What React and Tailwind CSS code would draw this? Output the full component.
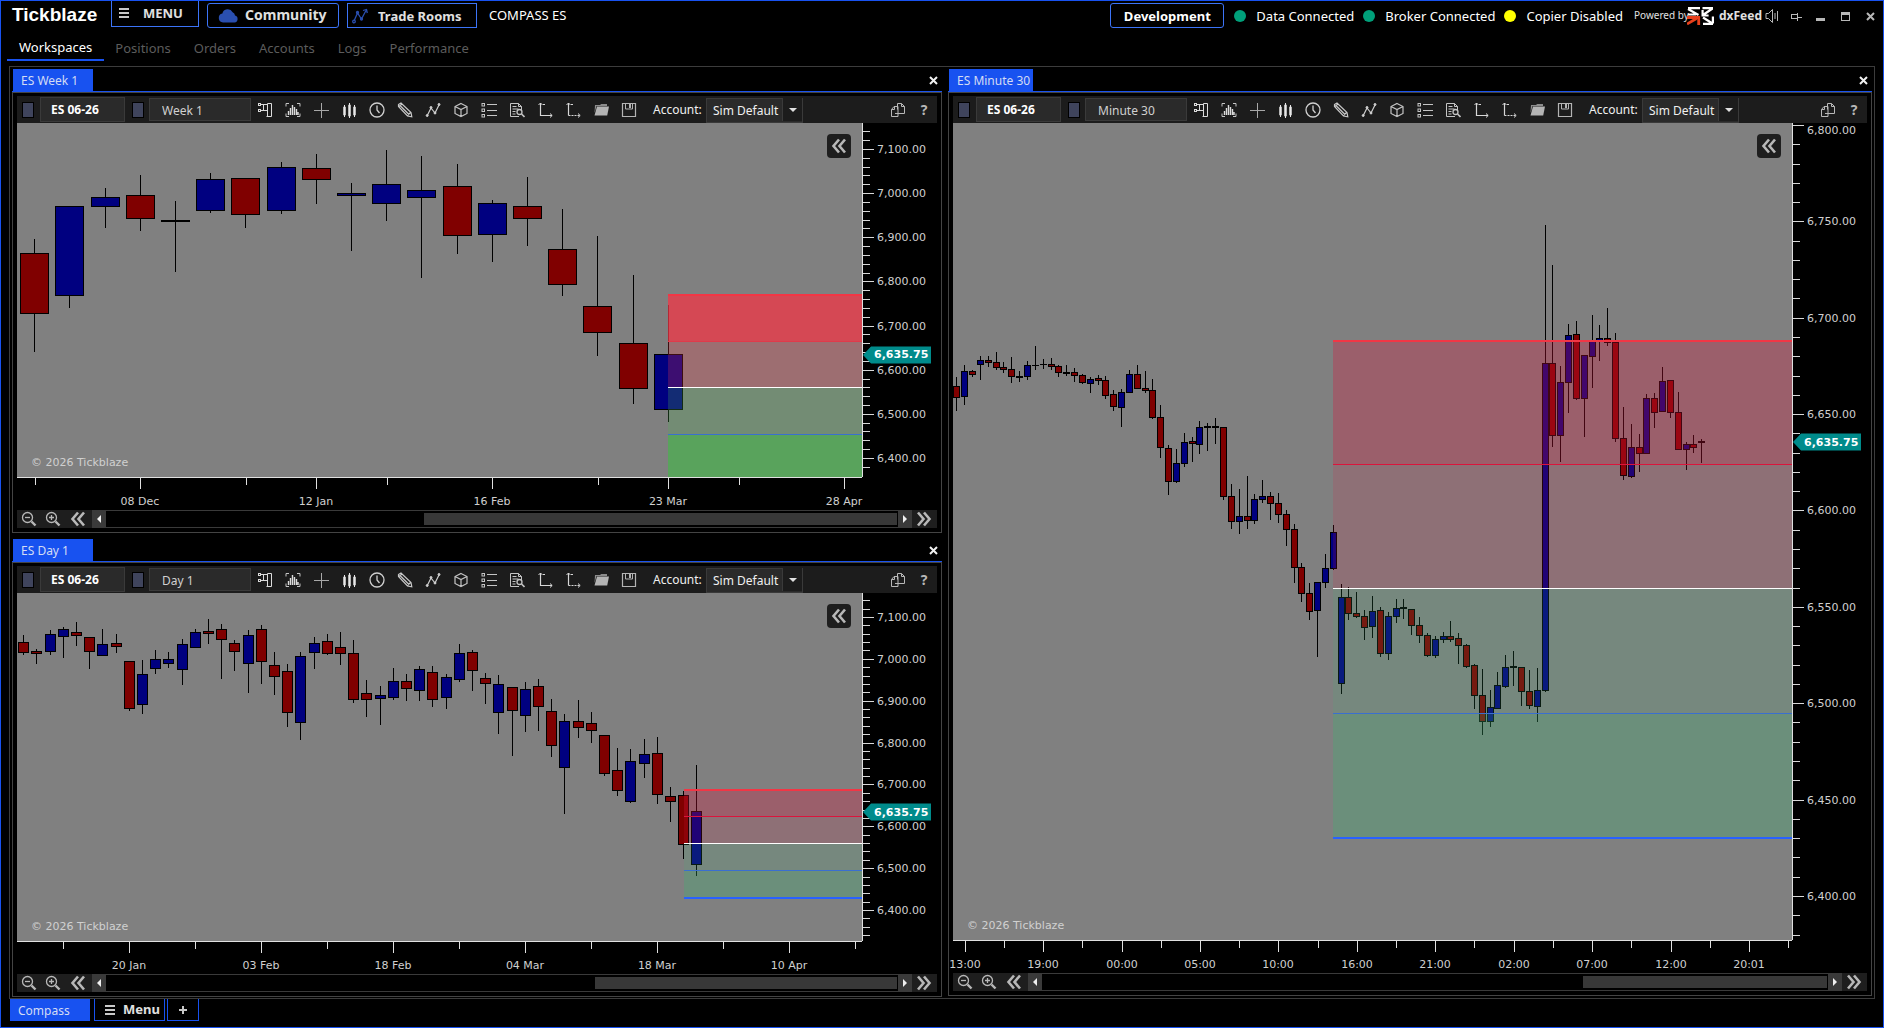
import React from "react";

/* Candle rows: centre x, high, body top, body bottom, low, kind (R falling, B rising, K unchanged). */
const WEEK_CANDLES = [
  [17,116,130,191,229,"R"],[52,83,83,173,185,"B"],[88,65,74,84,105,"B"],[123,52,72,96,108,"R"],
  [158,78,97,99,149,"K"],[193,50,56,88,90,"B"],[228,55,55,92,105,"R"],[264,39,44,88,91,"B"],
  [299,31,45,57,81,"R"],[334,60,70,73,128,"B"],[369,27,61,81,98,"B"],[404,33,67,75,155,"B"],
  [440,41,63,113,131,"R"],[475,77,80,112,139,"B"],[510,54,83,96,123,"R"],[545,86,126,162,173,"R"],
  [580,113,183,210,233,"R"],[616,152,220,266,281,"R"],[651,182,231,287,299,"B"],
];

const DAY_CANDLES = [
  [6,42,49,60,62,"R"],[19,56,58,61,71,"R"],[33,37,41,59,62,"B"],[46,34,36,44,65,"B"],
  [59,29,39,43,53,"R"],[72,44,44,59,76,"R"],[85,36,51,63,63,"B"],[99,41,50,54,60,"R"],
  [112,68,68,116,118,"R"],[125,67,81,112,121,"B"],[138,57,66,76,81,"B"],[151,59,66,71,75,"B"],
  [165,46,51,77,92,"B"],[178,36,39,55,55,"B"],[191,26,38,41,51,"R"],[204,31,36,47,86,"R"],
  [217,47,50,59,78,"R"],[231,37,42,71,100,"B"],[244,32,36,69,91,"R"],[257,59,72,84,102,"R"],
  [270,71,78,120,134,"R"],[283,59,63,130,147,"B"],[297,44,50,60,76,"B"],[310,41,48,61,62,"R"],
  [323,39,54,61,72,"R"],[336,47,60,107,110,"R"],[349,87,100,107,124,"R"],[363,93,102,106,132,"B"],
  [376,75,88,105,107,"B"],[389,81,88,96,108,"R"],[402,73,76,98,108,"B"],[415,73,79,107,114,"R"],
  [429,81,84,105,116,"B"],[442,51,60,87,89,"B"],[455,57,59,78,98,"R"],[468,80,85,91,111,"R"],
  [481,82,91,120,141,"B"],[495,94,94,118,163,"R"],[508,89,96,123,139,"B"],[521,86,93,114,138,"R"],
  [534,106,118,153,164,"R"],[547,121,128,175,221,"B"],[561,107,128,135,145,"R"],[574,119,130,138,150,"R"],
  [587,142,142,181,183,"R"],[600,155,177,198,203,"R"],[613,156,168,209,210,"B"],[627,146,161,171,185,"B"],
  [640,144,160,202,211,"R"],[653,194,203,209,229,"R"],[666,198,202,252,266,"R"],[679,172,218,272,283,"B"],
];

const MINUTE_CANDLES = [
  [3,254,263,275,288,"R"],[11,242,248,274,282,"B"],[19,247,248,252,254,"R"],[27,233,237,242,257,"B"],
  [35,233,237,240,244,"R"],[43,229,239,245,247,"R"],[50,239,244,247,250,"R"],[58,234,246,254,260,"R"],
  [66,248,253,255,259,"K"],[74,238,242,254,257,"B"],[82,223,242,243,247,"K"],[90,236,241,242,246,"K"],
  [98,235,241,244,247,"R"],[105,242,243,250,254,"R"],[113,242,249,251,253,"K"],[121,245,249,253,259,"R"],
  [129,251,252,260,261,"R"],[137,254,256,261,270,"B"],[145,252,255,258,262,"R"],[152,253,257,273,276,"R"],
  [160,267,271,284,288,"R"],[168,266,269,285,304,"B"],[176,247,251,270,270,"B"],[184,242,251,266,266,"R"],
  [192,248,265,268,270,"R"],[199,256,267,295,296,"R"],[207,282,294,325,335,"R"],[215,322,325,359,372,"R"],
  [223,326,340,359,360,"B"],[231,310,319,341,344,"B"],[239,314,318,321,339,"R"],[246,298,304,322,331,"B"],
  [254,300,303,305,328,"K"],[262,295,303,305,321,"K"],[270,304,304,374,377,"R"],[278,361,373,399,406,"R"],
  [286,366,393,399,411,"B"],[294,353,393,398,406,"R"],[301,371,376,398,401,"B"],[309,357,373,377,380,"B"],
  [317,369,373,381,397,"R"],[325,370,380,392,400,"R"],[333,387,391,407,423,"R"],[341,401,406,445,460,"R"],
  [348,440,444,471,479,"R"],[356,460,470,489,497,"R"],[364,459,459,488,534,"B"],[372,431,445,460,465,"B"],
  [380,402,409,446,447,"B"],[388,461,474,561,571,"B"],[395,464,474,491,497,"R"],[403,469,490,494,495,"R"],
  [411,487,493,505,517,"R"],[419,473,488,504,515,"B"],[427,484,487,531,534,"R"],[435,489,493,531,537,"B"],
  [443,476,485,494,500,"B"],[450,476,484,486,496,"K"],[458,486,486,503,512,"R"],[466,494,502,513,520,"R"],
  [474,510,512,533,534,"R"],[482,513,516,533,535,"B"],[490,509,513,517,520,"B"],[497,498,513,517,519,"R"],
  [505,510,515,523,541,"R"],[513,521,522,544,545,"R"],[521,541,542,573,586,"R"],[529,546,572,599,612,"R"],
  [537,567,584,599,604,"B"],[544,549,562,586,586,"B"],[552,532,544,564,565,"B"],[560,528,543,545,563,"K"],
  [568,544,544,569,583,"R"],[576,547,568,583,586,"R"],[584,545,567,584,599,"B"],[592,102,240,568,569,"B"],
  [599,142,240,313,324,"R"],[607,243,259,313,339,"B"],[615,201,212,260,290,"B"],[623,198,211,276,277,"R"],
  [631,232,232,276,314,"B"],[639,192,218,234,265,"B"],[646,202,215,218,238,"B"],[654,185,215,220,223,"R"],
  [662,210,219,316,319,"R"],[670,284,315,353,357,"R"],[678,301,324,354,355,"B"],[686,311,324,331,349,"R"],
  [693,271,275,331,331,"B"],[701,270,275,290,305,"R"],[709,244,258,289,289,"B"],[717,257,257,290,295,"R"],
  [725,269,289,327,327,"R"],[733,319,321,327,347,"B"],[740,312,321,325,330,"R"],[748,316,318,320,340,"K"],
];

const FILLS = { R: "#800000", B: "#000080", K: "#000000" };

/* Zones: top, bottom, colour, opacity. Lines: top, thickness, colour. */
const CHARTS = {
  week: {
    title: "ES Week 1", interval: "Week 1", width: 845, height: 354, body: 29, candles: WEEK_CANDLES,
    zoneX: 651,
    zones: [[171,218,"#f23645",0.75],[218,264,"#f23645",0.25],[265,311,"#4caf50",0.25],[311,354,"#4caf50",0.75]],
    lines: [[171,2,"#f23645"],[218,1,"#e03a4a"],[264,1,"#ffffff"],[311,1,"#3a6fd0"]],
    firstTick: 26, step: 44.14, prices: ["7,100.00","7,000.00","6,900.00","6,800.00","6,700.00","6,600.00","6,500.00","6,400.00"],
    last: 232,
    times: [[123,"08 Dec"],[299,"12 Jan"],[475,"16 Feb"],[651,"23 Mar"],[827,"28 Apr"]],
    minor: [18,229,370,581,722],
    track: "grid-cols-[318fr_473fr_1fr]",
  },
  day: {
    title: "ES Day 1", interval: "Day 1", width: 845, height: 348, body: 11, candles: DAY_CANDLES,
    zoneX: 667,
    zones: [[196,223,"#dc143c",0.3],[223,250,"#dc143c",0.15],[250,277,"#3cb371",0.15],[277,304,"#3cb371",0.3]],
    lines: [[196,2,"#f23645"],[223,1,"#dc143c"],[250,1,"#ffffff"],[277,1,"#3a6fd0"],[304,2,"#2962ff"]],
    firstTick: 24, step: 41.86, prices: ["7,100.00","7,000.00","6,900.00","6,800.00","6,700.00","6,600.00","6,500.00","6,400.00"],
    last: 219,
    times: [[112,"20 Jan"],[244,"03 Feb"],[376,"18 Feb"],[508,"04 Mar"],[640,"18 Mar"],[772,"10 Apr"]],
    minor: [46,178,310,442,574,706,838],
    track: "grid-cols-[489fr_302fr_1fr]",
  },
  minute: {
    title: "ES Minute 30", interval: "Minute 30", width: 839, height: 817, body: 7, candles: MINUTE_CANDLES,
    zoneX: 380,
    zones: [[217,341,"#dc143c",0.3],[341,465,"#dc143c",0.15],[465,590,"#3cb371",0.15],[590,714,"#3cb371",0.3]],
    lines: [[217,2,"#f23645"],[341,1,"#dc143c"],[465,1,"#ffffff"],[590,1,"#3a6fd0"],[714,2,"#2962ff"]],
    firstTick: 2, step: 96.37, prices: ["6,800.00","6,750.00","6,700.00","6,650.00","6,600.00","6,550.00","6,500.00","6,450.00","6,400.00"],
    last: 319,
    times: [[12,"13:00"],[90,"19:00"],[169,"00:00"],[247,"05:00"],[325,"10:00"],[404,"16:00"],[482,"21:00"],[561,"02:00"],[639,"07:00"],[718,"12:00"],[796,"20:01"]],
    minor: [51,129,208,286,365,443,521,600,678,757,835],
    track: "grid-cols-[541fr_244fr_1fr]",
  },
};

const Svg = ({ children, className = "size-4", ...rest }) => (
  <svg viewBox="0 0 16 16" className={className} fill="none" stroke="#c4c4c4" strokeWidth="1" aria-hidden="true" {...rest}>
    {children}
  </svg>
);

const TOOLS = [
  ["Order entry", <Svg stroke="#dcdcdc"><path d="M10.500 15V1.500h4v13h-5M4 2.500h6.500M4 8.500h6.500M6.500 2.500v6" /><rect x="1.500" y="1.500" width="2" height="2" /><rect x="1.500" y="7.500" width="2" height="2" /></Svg>],
  ["Chart trader", <Svg><path d="M1 4.500v-3h3M12 1.500h3v3M15 11.500v3h-3M4 14.500H1v-3" /><path d="M3.500 13V9M5.500 13V6M7.500 13V3M9.500 13V5M11.500 13V7M13 13v-3" strokeWidth="1.4" stroke="#dcdcdc" /></Svg>],
  ["Crosshair", <Svg stroke="#a8a8a8"><path d="M8.500 1v15M1 8.500h15" /></Svg>],
  ["Bar style", <Svg stroke="#e8e8e8" fill="#ffffff"><path d="M3.500 3v12M8.500 1v15M13.500 3v12" /><rect x="3" y="5.500" width="1" height="7" strokeWidth="1.500" /><rect x="8" y="3.500" width="1" height="10" strokeWidth="1.500" /><rect x="13" y="5.500" width="1" height="7" strokeWidth="1.500" /></Svg>],
  ["Session", <Svg stroke="#d0d0d0"><circle cx="8" cy="8" r="7" strokeWidth="1.3" /><path d="M8 3.500V8l2.500 3" strokeWidth="1.3" /></Svg>],
  ["Drawing tools", <Svg stroke="#c8c8c8"><path d="M1.500 2.500l2.500-1.500 10 9.500.8 4.300-4.300-.8L1.500 4.500zM3 3.500l9 9M5 2l-3 2.500M13.500 10.500l-3 3" strokeWidth="1.2" /></Svg>],
  ["Indicators", <Svg stroke="#d0d0d0"><path d="M2 14L6 6l4 5 4-8" strokeWidth="1.2" /><circle cx="2.200" cy="13.500" r="1" fill="#d0d0d0" /><circle cx="6" cy="5.500" r="1" fill="#d0d0d0" /><circle cx="10" cy="11" r="1" fill="#d0d0d0" /><circle cx="14" cy="2.500" r="1" fill="#d0d0d0" /></Svg>],
  ["Strategies", <Svg><path d="M8 1.500l6 3v7l-6 3-6-3v-7zM2 4.500l6 3 6-3M8 7.500v7" strokeWidth="1.2" /></Svg>],
  ["Data list", <Svg><path d="M6 2.500h10M6 8.500h10M6 13.500h10" /><rect x="1" y="1.500" width="2.500" height="2.500" /><rect x="1" y="7" width="2.500" height="2.500" /><rect x="1" y="12.500" width="2.500" height="2.500" /></Svg>],
  ["Inspect", <Svg><path d="M10 14.500H1.500v-13h8l3 3V8M9.500 1.500v3h3M3.500 4.500h4M3.500 7h6M3.500 9.500h3M3.500 12h3" /><circle cx="10.500" cy="10" r="2.500" strokeWidth="1.3" /><path d="M12.500 12l3 3" strokeWidth="1.6" /></Svg>],
  ["Scale axes", <Svg stroke="#d8d8d8"><path d="M3.500 1v12.500H15" strokeWidth="1.2" /><path d="M1.500 3l2-2 2 2M13 11.500l2.200 2-2.200 2M6 2.500h2" /></Svg>],
  ["Free axes", <Svg stroke="#d8d8d8"><path d="M3.500 1v12.500" strokeWidth="1.2" /><path d="M3.500 13.500H15" strokeDasharray="2 1" strokeWidth="1.2" /><path d="M1.500 3l2-2 2 2M13 11.500l2.200 2-2.200 2M6 2.500h2" /></Svg>],
  ["Open", <Svg stroke="none" fill="#a8a8a8"><path d="M2 3h5l1.200-1H14v2H3.500L1.500 11z" fill="#8c8c8c" /><path d="M4 4.500h12l-1.800 9H1.500z" fill="#b4b4b4" /></Svg>],
  ["Save", <Svg stroke="#b4b4b4"><path d="M1.500 1.500h13v13h-13z" strokeWidth="1.2" /><path d="M4.500 2v5h7V2" /><path d="M9 2v4" strokeWidth="2" /></Svg>],
];

function Chevrons({ right }) {
  return (
    <svg viewBox="0 0 16 16" className="size-4" fill="none" stroke="#b8b8b8" strokeWidth="2.600" aria-hidden="true">
      {right ? <path d="M2 1.500l5.500 6.500L2 14.500M8 1.500l5.500 6.500L8 14.500" /> : <path d="M8 1.500L2.500 8 8 14.500M14 1.500L8.500 8l5.500 6.500" />}
    </svg>
  );
}

const Cross = ({ className }) => (
  <svg viewBox="0 0 9 9" className={className} stroke="currentColor" strokeWidth="2" aria-hidden="true">
    <path d="M1 1l7 7M8 1L1 8" />
  </svg>
);

const Swatch = ({ label }) => (
  <button aria-label={label} className="h-4 w-3 shrink-0 border border-black bg-[#3f445c]" />
);

function Toolbar({ id, interval }) {
  return (
    <div className="flex h-[27px] items-center bg-[#1c1c1c] pl-[5px]">
      <Swatch label="Instrument link colour" />
      <input
        aria-label="Instrument"
        defaultValue="ES 06-26"
        className="ml-1.5 h-[25px] w-[85px] shrink-0 border border-[#3a3a3a] bg-[#2a2a2a] pl-2.5 text-xs font-bold text-white outline-none"
      />
      <div className="ml-[7px] flex">
        <Swatch label="Interval link colour" />
      </div>
      <input
        aria-label="Interval"
        defaultValue={interval}
        className="ml-[5px] h-[23px] w-[102px] shrink-0 border border-[#3a3a3a] bg-[#2a2a2a] pt-px pl-3 text-xs text-[#d0d0d0] outline-none"
      />
      <div className="flex shrink-0">
        {TOOLS.map(([name, icon]) => (
          <button key={name} aria-label={name} className="flex w-7 justify-center">{icon}</button>
        ))}
      </div>
      <label htmlFor={`${id}-account`} className="ml-2.5 w-[53px] shrink-0 pt-px text-xs text-[#f0f0f0]">Account:</label>
      <div className="relative h-[25px] w-[97px] shrink-0">
        <select id={`${id}-account`} className="h-full w-full appearance-none border border-[#3a3a3a] bg-[#2a2a2a] pt-px pl-1.5 text-xs text-[#f0f0f0] outline-none">
          <option>Sim Default</option>
        </select>
        <span className="pointer-events-none absolute inset-y-px right-px flex w-5 items-center justify-center border-l border-[#3a3a3a] bg-[#1c1c1c]">
          <svg viewBox="0 0 8 4" className="h-1 w-2" fill="#e0e0e0" aria-hidden="true"><path d="M0 0h8L4 4z" /></svg>
        </span>
      </div>
      <div className="ml-auto flex items-center gap-[13px] pr-2">
        <button aria-label="Duplicate">
          <Svg stroke="#b8b8b8"><path d="M5 11.500h9.500v-7l-3-3h-4v6M11.500 1.500v3h3" /><path d="M7.500 4.500H4L1.500 7.500v7h6.500v-3M1.500 7.500H4.500V4.500M8 4.500v7" /></Svg>
        </button>
        <button aria-label="Help" className="w-2.5 text-sm leading-4 font-bold text-[#b8b8b8]">?</button>
      </div>
    </div>
  );
}

const pct = (v, total) => `${(100 * v) / total}%`;

function Plot({ chart }) {
  const { width, height, body, candles, zoneX, zones, lines } = chart;
  const half = (body - 1) / 2;
  return (
    <div className="relative min-h-0 bg-[#808080]">
      <svg viewBox={`0 0 ${width} ${height}`} preserveAspectRatio="none" shapeRendering="crispEdges" className="absolute inset-0 h-full w-full" role="img" aria-label={`${chart.title} candles`}>
        {candles.map(([x, high, top, bottom, low, kind]) => (
          <g key={x}>
            <rect x={x} y={high} width="1" height={low - high} fill="#000" />
            <rect x={x - half} y={top} width={body} height={bottom - top} fill="#000" />
            {bottom - top > 2 && (
              <rect x={x - half + 1} y={top + 1} width={body - 2} height={bottom - top - 2} fill={FILLS[kind]} />
            )}
          </g>
        ))}
        {zones.map(([top, bottom, fill, opacity]) => (
          <rect key={top} x={zoneX} y={top} width={width - zoneX} height={bottom - top} fill={fill} fillOpacity={opacity} />
        ))}
        {lines.map(([top, thickness, fill]) => (
          <rect key={top} x={zoneX} y={top} width={width - zoneX} height={thickness} fill={fill} />
        ))}
      </svg>
      <button aria-label="Collapse panel" className="absolute top-[11px] right-[11px] flex size-6 items-center justify-center rounded bg-[#1e1e1e]">
        <Chevrons />
      </button>
      <span className="absolute bottom-[7px] left-3.5 text-[11px] leading-[14px] text-[#d0d0d0] font-['DejaVu_Sans',sans-serif]">© 2026 Tickblaze</span>
    </div>
  );
}

function PriceAxis({ chart }) {
  const { height, firstTick, step, prices, last } = chart;
  const minor = step / 5;
  const ticks = [];
  for (let k = -3; firstTick + k * minor < height - 3; k++) {
    const y = Math.round(firstTick + k * minor);
    if (y > 0) ticks.push([y, k % 5 === 0 ? 11 : 7]);
  }
  return (
    <div className="relative border-l border-[#e0e0e0] text-[11px] leading-[14px] text-[#d0d0d0] font-['DejaVu_Sans',sans-serif]">
      <svg viewBox={`0 0 11 ${height}`} preserveAspectRatio="none" shapeRendering="crispEdges" className="absolute inset-y-0 left-0 h-full w-[11px]" aria-hidden="true">
        {ticks.map(([y, w]) => <rect key={y} x="0" y={y} width={w} height="1" fill="#d8d8d8" />)}
      </svg>
      {prices.map((label, i) => (
        <span key={label} className="absolute left-3.5 -translate-y-1/2" style={{ top: pct(Math.max(8, Math.round(firstTick + i * step) + 1), height) }}>{label}</span>
      ))}
      <div className="absolute left-0 flex h-[17px] -translate-y-1/2 items-center font-bold text-white" style={{ top: pct(last, height) }}>
        <svg viewBox="0 0 8 17" className="h-[17px] w-2" fill="#008b8b" aria-hidden="true"><path d="M0 8.500L8 0v17z" /></svg>
        <span className="flex h-[17px] w-[60px] items-center bg-[#008b8b] pl-[3px]">6,635.75</span>
      </div>
    </div>
  );
}

function TimeAxis({ chart }) {
  const { width, times, minor } = chart;
  return (
    <div className="relative border-t border-[#e0e0e0] text-[11px] leading-[14px] text-[#d0d0d0] font-['DejaVu_Sans',sans-serif]">
      <svg viewBox={`0 0 ${width} 11`} preserveAspectRatio="none" shapeRendering="crispEdges" className="absolute inset-x-0 top-0 h-[11px] w-full" aria-hidden="true">
        {times.map(([x]) => <rect key={x} x={x} y="0" width="1" height="11" fill="#e0e0e0" />)}
        {minor.map((x) => <rect key={x} x={x} y="0" width="1" height="7" fill="#e0e0e0" />)}
      </svg>
      {times.map(([x, label]) => (
        <span key={label} className="absolute top-[17px] -translate-x-1/2 whitespace-nowrap" style={{ left: pct(x, width) }}>{label}</span>
      ))}
    </div>
  );
}

function Magnifier({ plus }) {
  return (
    <Svg stroke="#b8b8b8">
      <circle cx="6.500" cy="6.500" r="5" strokeWidth="1.300" />
      <path d={plus ? "M4 6.500h5M6.500 4v5" : "M4 6.500h5"} strokeWidth="1.300" />
      <path d="M10.500 10.500l4 4" strokeWidth="2.400" />
    </Svg>
  );
}

function ScrollRow({ track }) {
  return (
    <div className="flex h-[18px] bg-[#1e1e1e]">
      <div className="flex w-[75px] shrink-0 items-center justify-around pr-0.5">
        <button aria-label="Zoom out"><Magnifier /></button>
        <button aria-label="Zoom in"><Magnifier plus /></button>
        <button aria-label="Scroll to start"><Chevrons /></button>
      </div>
      <button aria-label="Scroll left" className="flex w-3.5 shrink-0 items-center justify-center bg-[#3a3a3a]">
        <svg viewBox="0 0 4 8" className="h-2 w-1" fill="#f0f0f0" aria-hidden="true"><path d="M4 0v8L0 4z" /></svg>
      </button>
      <div className={`grid flex-1 items-center border-y border-[#3a3a3a] bg-black ${track}`}>
        <div className="col-start-2 h-3 bg-[#383838]" />
      </div>
      <button aria-label="Scroll right" className="flex w-3.5 shrink-0 items-center justify-center bg-[#3a3a3a]">
        <svg viewBox="0 0 4 8" className="h-2 w-1" fill="#f0f0f0" aria-hidden="true"><path d="M0 0v8l4-4z" /></svg>
      </button>
      <button aria-label="Scroll to end" className="flex w-[25px] shrink-0 items-center justify-center pr-0.5"><Chevrons right /></button>
    </div>
  );
}

function Panel({ id, tabWidth }) {
  const chart = CHARTS[id];
  return (
    <section className="flex min-h-0 min-w-0 flex-col">
      <div className="flex h-[23px] items-stretch border-b border-[#1852f0] pl-px">
        <button className={`bg-[#1852f0] pt-0.5 pl-2 text-left text-xs whitespace-nowrap text-[#d4dcf4] ${tabWidth}`}>{chart.title}</button>
        <button aria-label={`Close ${chart.title}`} className="mr-1 ml-auto flex items-center text-[#f0f0f0]">
          <Cross className="h-[9px] w-[9px]" />
        </button>
      </div>
      <div className="flex min-h-0 flex-1 flex-col border border-[#444444] px-1 pt-[3px] pb-1">
        <Toolbar id={id} interval={chart.interval} />
        <div className="grid min-h-0 flex-1 grid-cols-[minmax(0,1fr)_75px] grid-rows-[minmax(0,1fr)_33px]">
          <Plot chart={chart} />
          <PriceAxis chart={chart} />
          <TimeAxis chart={chart} />
        </div>
        <ScrollRow track={chart.track} />
      </div>
    </section>
  );
}

const Burger = () => (
  <svg viewBox="0 0 10 10" className="size-2.5" stroke="#c8c8c8" strokeWidth="2" shapeRendering="crispEdges" aria-hidden="true">
    <path d="M0 1h10M0 5h10M0 9h10" />
  </svg>
);

const Status = ({ color, children }) => (
  <span className="flex items-center gap-2.5 whitespace-nowrap text-white">
    <i className={`size-3 rounded-full ${color}`} />
    {children}
  </span>
);

function Header() {
  return (
    <header className="flex h-[30px] items-start pl-[11px] text-[13px] leading-[18px]">
      <h1 className="w-[99px] pt-0.5 text-[19px] leading-6 font-bold text-white font-['Liberation_Sans',sans-serif]">Tickblaze</h1>
      <button className="flex h-[26px] w-[88px] items-center gap-3.5 border border-t-0 border-[#3c74f8] pb-px pl-[7px] font-bold text-[#e0e0e0]">
        <Burger />MENU
      </button>
      <button className="mt-0.5 ml-2 flex h-[25px] w-[132px] items-center gap-1.5 rounded-[3px] border border-[#3c74f8] pb-px pl-2.5 text-sm font-bold text-[#e0e0e0]">
        <svg viewBox="0 0 21 15" className="h-[15px] w-[21px]" fill="#2a4fb0" aria-hidden="true">
          <path d="M5 14.500a4.500 4.500 0 0 1-.6-8.900A5.500 5.500 0 0 1 14.600 4.200 4 4 0 0 1 17 7.500a3.600 3.600 0 0 1-.4 7z" />
        </svg>
        Community
      </button>
      <button className="mt-0.5 ml-2 flex h-[25px] w-[130px] items-center gap-2.5 border border-[#3c74f8] pl-1 font-bold text-[#e0e0e0]">
        <svg viewBox="0 0 16 16" className="size-4" fill="none" stroke="#2a4fb0" strokeWidth="1.300" aria-hidden="true">
          <path d="M2 13L5.500 5l4 6L14 2.500M11 2.500l3.500-1 .8 3.500" />
          <circle cx="2" cy="13.500" r="1.300" /><circle cx="5.500" cy="4.500" r="1" /><circle cx="9.500" cy="11" r="1" />
        </svg>
        Trade Rooms
      </button>
      <span className="mt-[5px] ml-3 text-white">COMPASS ES</span>
      <div className="mt-0.5 ml-auto flex h-[25px] items-center">
        <button className="h-[25px] w-[114px] rounded-[3px] border border-[#3c74f8] font-bold text-white">Development</button>
        <div className="ml-2.5 flex gap-[9px]">
          <Status color="bg-[#00a07a]">Data Connected</Status>
          <Status color="bg-[#00a07a]">Broker Connected</Status>
          <Status color="bg-[#ffff00]">Copier Disabled</Status>
        </div>
        <span className="ml-[11px] w-[53px] pb-0.5 text-[10px] whitespace-nowrap text-[#e0e0e0]">Powered by</span>
        <svg viewBox="0 0 27 18" className="h-[18px] w-[27px]" fill="none" stroke="#ffffff" strokeWidth="2.200" aria-hidden="true">
          <path d="M1 1.100h12M1 2l10.500 6M1.100 7.500h8" />
          <path d="M26 1.100H15.500M16 8l9.500-6.500M15.600 3v5.500h6" />
          <path d="M26 16.900H16M16 10.500l9.500 6M25.900 9.500v7" />
          <path d="M0 17l9.500-5.500M0 10.500h11.700V18" stroke="#e8401c" strokeWidth="2.800" />
        </svg>
        <span className="ml-[5px] w-[42px] text-xs font-bold text-[#e0e0e0]">dxFeed</span>
        <button aria-label="Sound" className="ml-1">
          <svg viewBox="0 0 14 14" className="size-3.5" fill="none" stroke="#b8b8b8" aria-hidden="true"><path d="M1 4.500h2.500l4-4v13l-4-4H1zM10 4v6M12.500 2v10" /></svg>
        </button>
        <div className="flex items-center gap-3.5 pr-2 pl-3 pt-0.5">
          <button aria-label="Pin"><svg viewBox="0 0 11 8" className="h-2 w-[11px]" fill="none" stroke="#b8b8b8" shapeRendering="crispEdges" aria-hidden="true"><path d="M0 1.500h6M0 5.500h6M.5 1v5M6.500 0v8M7 4h4" /></svg></button>
          <button aria-label="Minimize" className="mt-1.5 h-[3px] w-[9px] bg-[#b8b8b8]" />
          <button aria-label="Maximize" className="ml-0.5 size-[9px] border border-t-[3px] border-[#b8b8b8]" />
          <button aria-label="Close" className="ml-0.5 text-[#b8b8b8]"><Cross className="h-[9px] w-[9px]" /></button>
        </div>
      </div>
    </header>
  );
}

export default function App() {
  return (
    <div className="flex h-screen min-h-[640px] flex-col border border-[#1852f0] bg-black font-['Noto_Sans','Open_Sans',sans-serif]">
      <Header />
      <nav className="flex h-[30px] pl-1.5 text-[13px] leading-[18px] text-[#5c5c5c]">
        <a href="#workspaces" className="border-b-2 border-[#1852f0] px-3 pt-[7px] text-white">Workspaces</a>
        {["Positions", "Orders", "Accounts", "Logs", "Performance"].map((n) => (
          <a key={n} href={`#${n.toLowerCase()}`} className="pt-2 pr-3 pl-[11px]">{n}</a>
        ))}
      </nav>
      <main className="mx-2 mt-[5px] grid min-h-0 flex-1 grid-cols-[930fr_924fr] gap-1.5 border border-[#3c3c3c] px-0.5 pt-0.5 pb-px">
        <div className="grid min-h-0 min-w-0 grid-rows-[464fr_458fr] gap-1.5">
          <Panel id="week" tabWidth="w-20" />
          <Panel id="day" tabWidth="w-20" />
        </div>
        <div className="grid min-h-0 min-w-0 pb-px">
          <Panel id="minute" tabWidth="w-[84px]" />
        </div>
      </main>
      <footer className="flex h-7 items-start pl-[9px]">
        <button className="h-[22px] w-20 bg-[#1852f0] pt-0.5 pl-2 text-left text-xs text-[#d4dcf4]">Compass</button>
        <button className="ml-1 flex h-[22px] w-[71px] items-center gap-2 border border-t-0 border-[#1852f0] pl-2.5 text-[13px] font-bold text-[#e0e0e0]">
          <Burger />Menu
        </button>
        <button aria-label="Add workspace" className="ml-0.5 flex h-[22px] w-8 items-center justify-center border border-t-0 border-[#1852f0]">
          <svg viewBox="0 0 8 8" className="size-2" stroke="#c8c8c8" strokeWidth="2" aria-hidden="true"><path d="M4 0v8M0 4h8" /></svg>
        </button>
      </footer>
    </div>
  );
}
